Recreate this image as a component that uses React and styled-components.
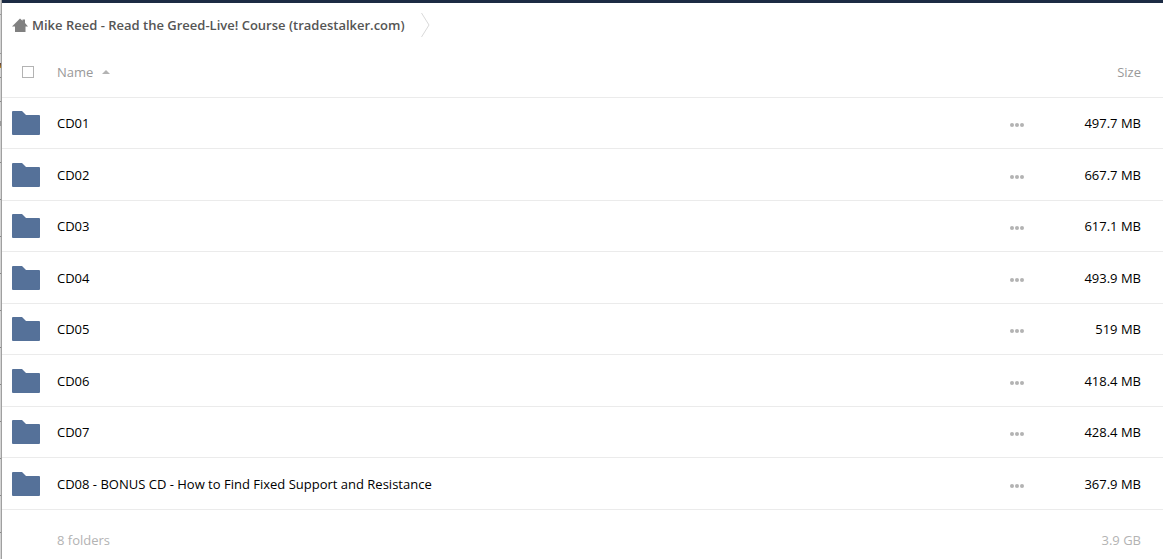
import React from 'react';
import styled, { createGlobalStyle } from 'styled-components';

const folders = [
  { name: 'CD01', size: '497.7 MB' },
  { name: 'CD02', size: '667.7 MB' },
  { name: 'CD03', size: '617.1 MB' },
  { name: 'CD04', size: '493.9 MB' },
  { name: 'CD05', size: '519 MB' },
  { name: 'CD06', size: '418.4 MB' },
  { name: 'CD07', size: '428.4 MB' },
  {
    name: 'CD08 - BONUS CD - How to Find Fixed Support and Resistance',
    size: '367.9 MB',
  },
];

const HomeIcon = () => (
  <svg width='16' height='15' viewBox='0 0 16 15' fill='#808080' aria-hidden='true'>
    <path d='M8 0.5 L10.5 2.8 V1.5 H13 V5 L16 8.5 H13.5 V14 H3 V8.5 H0 Z' />
  </svg>
);

const FolderIcon = () => (
  <svg width='28' height='24' viewBox='0 0 28 24' fill='#557199' aria-hidden='true'>
    <path d='M1 0 H10 L14 4 H27 Q28 4 28 5 V23 Q28 24 27 24 H1 Q0 24 0 23 V1 Q0 0 1 0 Z' />
  </svg>
);

const DotsIcon = () => (
  <svg width='14' height='4' viewBox='0 0 14 4' fill='#b3b3b3' aria-hidden='true'>
    <circle cx='2' cy='2' r='2' />
    <circle cx='7' cy='2' r='2' />
    <circle cx='12' cy='2' r='2' />
  </svg>
);

const App = () => {
  return (
    <>
      <GlobalStyle />
      <Page>
        <Edge />
        <Container>
          <Breadcrumbs aria-label='Path'>
            <Crumb href='#home'>
              <HomeIcon />
              Mike Reed - Read the Greed-Live! Course (tradestalker.com)
            </Crumb>
            <svg width='9' height='26' viewBox='0 0 9 26' fill='none' aria-hidden='true'>
              <path d='M0.5 1 L8 13 L0.5 25' stroke='#d9d9d9' />
            </svg>
          </Breadcrumbs>
          <Table>
            <thead>
              <HeadRow>
                <CheckCell>
                  <Checkbox type='checkbox' aria-label='Select all' />
                </CheckCell>
                <th>
                  <SortButton type='button'>
                    Name
                    <svg width='8' height='4' viewBox='0 0 8 4' fill='#b3b3b3' aria-hidden='true'>
                      <path d='M0 4 L4 0 L8 4 Z' />
                    </svg>
                  </SortButton>
                </th>
                <ActionCell as='th' />
                <SizeHead>
                  <SortButton type='button'>Size</SortButton>
                </SizeHead>
              </HeadRow>
            </thead>
            <tbody>
              {folders.map(({ name, size }) => (
                <Row key={name}>
                  <IconCell>
                    <FolderIcon />
                  </IconCell>
                  <td>
                    <FolderLink href='#folder'>{name}</FolderLink>
                  </td>
                  <ActionCell>
                    <MoreButton type='button' aria-label='More'>
                      <DotsIcon />
                    </MoreButton>
                  </ActionCell>
                  <SizeCell>{size}</SizeCell>
                </Row>
              ))}
            </tbody>
            <tfoot>
              <FootRow>
                <td />
                <td>8 folders</td>
                <td />
                <SizeCell>3.9 GB</SizeCell>
              </FootRow>
            </tfoot>
          </Table>
        </Container>
      </Page>
    </>
  );
};

export default App;

// styles
const GlobalStyle = createGlobalStyle`
  * {
    box-sizing: border-box;
  }

  body {
    margin: 0;
    background: #fff;
    color: #000;
    font-family: 'Open Sans', 'Noto Sans', sans-serif;
    font-size: 13px;
    line-height: 18px;
  }

  svg {
    display: block;
    flex-shrink: 0;
  }

  button {
    padding: 0;
    border: 0;
    background: none;
    color: inherit;
    font: inherit;
    cursor: pointer;
  }
`;

const Page = styled.div`
  display: flex;
  min-height: 100vh;
`;

/* sliver of the list behind the panel, ruled every 37px */
const Edge = styled.div`
  flex: none;
  width: 2px;
  border-right: 1px solid #a0a0a0;
  background:
    linear-gradient(#5a3a3a, #c08a20) 0 63px / 2px 5px no-repeat,
    linear-gradient(#999, #999) 0 121px / 2px 5px no-repeat,
    linear-gradient(#999, #999) 0 14px / 2px 1px no-repeat,
    linear-gradient(#999, #999) 0 53px / 2px 1px no-repeat,
    linear-gradient(#888, #888) 0 77px / 2px 1px no-repeat,
    linear-gradient(#888, #888) 0 101px / 2px 1px no-repeat,
    linear-gradient(#d4d4d4, #d4d4d4) 0 0 / 2px 162px no-repeat,
    repeating-linear-gradient(#d4d4d4 0 14px, #888 14px 15px, #d4d4d4 15px 37px);
`;

const Container = styled.main`
  flex: 1;
  min-width: 0;
  border-top: 3px solid #1c2b44;
`;

const Breadcrumbs = styled.nav`
  display: flex;
  align-items: center;
  gap: 16px;
  height: 44px;
  padding-left: 10px;
`;

const Crumb = styled.a`
  display: flex;
  align-items: center;
  gap: 4px;
  color: #555;
  font-weight: 600;
  text-decoration: none;
`;

const Table = styled.table`
  width: 100%;
  border-collapse: separate;
  border-spacing: 0;

  th,
  td {
    padding: 0;
    text-align: left;
    font-weight: 400;
  }
`;

const HeadRow = styled.tr`
  height: 51px;
  color: #999;

  th {
    border-bottom: 1px solid #ebebeb;
  }
`;

/* rows share an uneven height, 103px for each pair */
const Row = styled.tr`
  height: 51px;

  &:nth-child(even) {
    height: 52px;
  }

  td {
    border-bottom: 1px solid #ebebeb;
  }
`;

const FootRow = styled.tr`
  height: 60px;
  color: #b3b3b3;
`;

const CheckCell = styled.th`
  width: 55px;

  && {
    padding-left: 20px;
  }
`;

const Checkbox = styled.input`
  display: block;
  appearance: none;
  width: 12px;
  height: 12px;
  margin: 0;
  border: 1px solid #b3b3b3;
  background: #fff;
`;

const SortButton = styled.button`
  display: inline-flex;
  align-items: center;
  gap: 9px;
`;

const IconCell = styled.td`
  && {
    padding-left: 10px;
  }
`;

const FolderLink = styled.a`
  color: inherit;
  text-decoration: none;
`;

const ActionCell = styled.td`
  width: 30px;
`;

const MoreButton = styled.button`
  display: flex;
  align-items: center;
  height: 24px;
  padding-top: 4px;
`;

const SizeHead = styled.th`
  width: 123px;

  && {
    padding-right: 22px;
    text-align: right;
  }
`;

const SizeCell = styled.td`
  && {
    padding-right: 22px;
    text-align: right;
  }
`;
